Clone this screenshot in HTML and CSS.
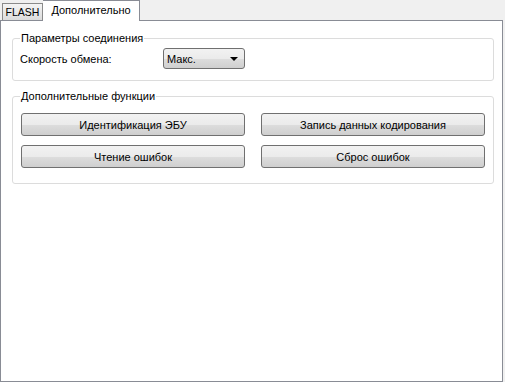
FILE: index.html
```html
<!doctype html>
<html>
  <head>
    <meta charset="UTF-8" />
    <title>Дополнительно</title>
    <link rel="stylesheet" href="styles.css">
  </head>
  <body>
    <div class="tabs">
      <div class="tab">FLASH</div>
      <div class="tab active">Дополнительно</div>
    </div>

    <div class="panel">
      <fieldset class="group">
        <legend>Параметры соединения</legend>
        <div class="field">
          <span class="field-label">Скорость обмена:</span>
          <div class="combo">
            <span>Макс.</span>
            <span class="arrow"></span>
          </div>
        </div>
      </fieldset>

      <fieldset class="group">
        <legend>Дополнительные функции</legend>
        <div class="buttons">
          <button class="btn">Идентификация ЭБУ</button>
          <button class="btn">Запись данных кодирования</button>
          <button class="btn">Чтение ошибок</button>
          <button class="btn">Сброс ошибок</button>
        </div>
      </fieldset>
    </div>
  </body>
</html>
```

FILE: styles.css
```css
* {
  box-sizing: border-box;
}

body {
  margin: 0;
  width: 505px;
  height: 382px;
  background: #f0f0f0;
  font-family: "Liberation Sans", Arial, sans-serif;
  font-size: 11px;
  color: #000;
}

.tabs {
  display: flex;
  align-items: flex-end;
  height: 20px;
  padding-left: 2px;
}

.tab {
  width: 41px;
  height: 17px;
  text-align: center;
  line-height: 16px;
  font-size: 10.5px;
  border: 1px solid #8a8a8a;
  border-bottom: none;
  background: linear-gradient(#f4f4f4, #dcdcdc);
}

.tab.active {
  position: relative;
  width: 97px;
  height: 21px;
  margin-bottom: -1px;
  line-height: 19px;
  font-size: 11px;
  background: #fff;
  border-color: #898c95;
  border-left: none;
  z-index: 1;
}

.panel {
  width: 503px;
  height: 362px;
  border: 1px solid #898c95;
  background: #fff;
  padding: 11px 8px 0 11px;
}

.group {
  margin: 0 0 9px;
  padding: 0 8px 11px 7px;
  border: 1px solid #dcdcdc;
  border-radius: 3px;
}

.group legend {
  padding: 0 1px;
  margin-left: 0;
  line-height: 13px;
}

.field {
  display: flex;
  align-items: center;
  margin-top: 3px;
}

.field-label {
  width: 143px;
}

.combo {
  display: flex;
  align-items: center;
  justify-content: space-between;
  width: 82px;
  height: 21px;
  padding: 0 6px 0 3px;
  border: 1px solid #707070;
  border-radius: 3px;
  background: linear-gradient(#f2f2f2 0%, #ebebeb 50%, #dddddd 51%, #cfcfcf 100%);
}

.arrow {
  width: 0;
  height: 0;
  border-left: 4px solid transparent;
  border-right: 4px solid transparent;
  border-top: 4px solid #000;
}

.buttons {
  display: grid;
  grid-template-columns: 224px 224px;
  column-gap: 16px;
  row-gap: 9px;
  padding: 10px 0 4px 1px;
}

.btn {
  height: 23px;
  padding: 0;
  font: inherit;
  color: #000;
  border: 1px solid #707070;
  border-radius: 3px;
  background: linear-gradient(#f2f2f2 0%, #ebebeb 50%, #dddddd 51%, #cfcfcf 100%);
}
```
